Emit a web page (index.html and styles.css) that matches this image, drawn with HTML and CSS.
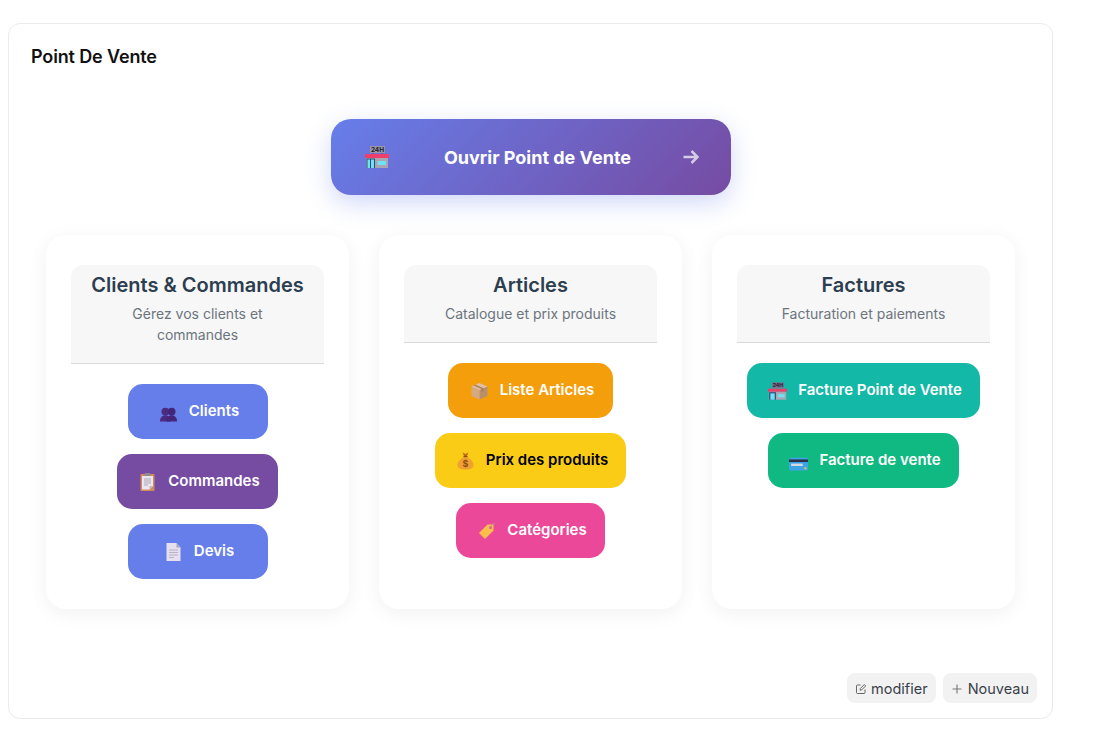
FILE: index.html
```html
<!DOCTYPE html>
<html lang="fr">
<head>
<meta charset="utf-8">
<title>Point De Vente</title>
<link rel="stylesheet" href="styles.css">
</head>
<body>
<div class="panel">
  <div class="panel-title">Point De Vente</div>

  <a class="hero" href="#">
    <svg class="hero-icon" viewBox="0 0 24 22">
      <rect x="5" y="0" width="15" height="7" fill="#9a96a8"/>
      <text x="12.500" y="6" text-anchor="middle" class="sign">24H</text>
      <rect x="7.500" y="7" width="1" height="1" fill="#555"/>
      <rect x="16.500" y="7" width="1" height="1" fill="#555"/>
      <rect x="0" y="8" width="24" height="4" fill="#ee3f6c"/>
      <rect x="1" y="12" width="22" height="10" fill="#a9a6b4"/>
      <rect x="1.500" y="12.500" width="8.500" height="9.500" fill="#2e4a78"/>
      <rect x="2.500" y="13.500" width="2.500" height="8.500" fill="#6fe3f5"/>
      <rect x="6" y="13.500" width="3" height="8.500" fill="#6fe3f5"/>
      <rect x="12.500" y="15" width="8.500" height="4" fill="#6fe3f5"/>
    </svg>
    <span class="hero-label">Ouvrir Point de Vente</span>
    <svg class="hero-arrow" viewBox="0 0 16 14"><path d="M0.500 7h14M8.500 1L14.500 7l-6 6" fill="none" stroke="currentColor" stroke-width="2.500"/></svg>
  </a>

  <div class="columns">
    <section class="col">
      <header class="col-head">
        <h3>Clients &amp; Commandes</h3>
        <p>Gérez vos clients et commandes</p>
      </header>
      <div class="col-btns">
        <a class="btn blue" href="#">
          <svg class="ico" viewBox="0 -2.500 20 20">
            <circle cx="6.500" cy="7" r="4.300" fill="#4b2a80"/>
            <path d="M0.500 18c0-4.500 2.500-7 6-7s6 2.500 6 7z" fill="#4b2a80"/>
            <circle cx="13.500" cy="7" r="4.300" fill="#43267a"/>
            <path d="M7.500 18c0-4.500 2.500-7 6-7s6 2.500 6 7z" fill="#43267a"/>
          </svg>Clients
        </a>
        <a class="btn purple" href="#">
          <svg class="ico" viewBox="0 0 16 18">
            <rect x="1" y="1" width="14" height="17" rx="1" fill="#cf8d5e"/>
            <path d="M2.500 3h11v10l-3.500 3.500h-7.500z" fill="#ebe6ee"/>
            <path d="M10 16.500l3.500-3.500h-3.500z" fill="#bcb6c6"/>
            <rect x="5" y="0" width="6" height="3" rx="1" fill="#8f8a96"/>
            <path d="M4.500 6h7M4.500 8h7M4.500 10h7M4.500 12h4" stroke="#a7a2b0" stroke-width="0.900"/>
          </svg>Commandes
        </a>
        <a class="btn blue" href="#">
          <svg class="ico" viewBox="0 0 16 18">
            <path d="M1 0h10l4 4.500v13.500h-14z" fill="#e6dfee"/>
            <path d="M11 0l4 4.500h-4z" fill="#aaa3b6"/>
            <path d="M3.500 7h9M3.500 9.500h9M3.500 12h9M3.500 14.500h5" stroke="#b3acbf" stroke-width="0.900"/>
          </svg>Devis
        </a>
      </div>
    </section>

    <section class="col">
      <header class="col-head">
        <h3>Articles</h3>
        <p>Catalogue et prix produits</p>
      </header>
      <div class="col-btns">
        <a class="btn orange" href="#">
          <svg class="ico" viewBox="0 0 18 18">
            <path d="M9 1l8 3.500v9.500l-8 3.500z" fill="#b98f6b"/>
            <path d="M9 1l-8 3.500v9.500l8 3.500z" fill="#d2a983"/>
            <path d="M1 4.500l8 3.500 8-3.500-8-3.500z" fill="#e2c09e"/>
            <path d="M5 2.700l8 3.500v3l-2 .8v-3l-8-3.500z" fill="#a97d5b"/>
          </svg>Liste Articles
        </a>
        <a class="btn yellow" href="#">
          <svg class="ico" viewBox="0 0 18 18">
            <path d="M6 0.500l3 1.500 3-1.500-1.500 3.500h-3z" fill="#b96a20"/>
            <rect x="7" y="4" width="4" height="1.500" fill="#8d4f17"/>
            <path d="M7 5.500c-3.500 1.500-6 4.500-6 7.500 0 3 3 4.500 8 4.500s8-1.500 8-4.500c0-3-2.500-6-6-7.500z" fill="#f0a030"/>
            <text x="9" y="15" text-anchor="middle" class="dollar">$</text>
          </svg>Prix des produits
        </a>
        <a class="btn pink" href="#">
          <svg class="ico" viewBox="0 0 18 18">
            <path d="M10 2.500h6v6l-8.500 8.500-6-6z" fill="#fbbf4a"/>
            <circle cx="13" cy="5.500" r="1.500" fill="#d9629c"/>
            <path d="M13 5.500c1-3 3-4.500 4.500-3.500" fill="none" stroke="#a99bc0" stroke-width="0.800"/>
          </svg>Catégories
        </a>
      </div>
    </section>

    <section class="col">
      <header class="col-head">
        <h3>Factures</h3>
        <p>Facturation et paiements</p>
      </header>
      <div class="col-btns">
        <a class="btn teal" href="#">
          <svg class="ico" viewBox="0 0 24 22">
            <rect x="5" y="0" width="15" height="7" fill="#77718f"/>
            <text x="12.500" y="6" text-anchor="middle" class="sign">24H</text>
            <rect x="0" y="8" width="24" height="4" fill="#ee3f6c"/>
            <rect x="1" y="12" width="22" height="10" fill="#a9a6b4"/>
            <rect x="1.500" y="12.500" width="8.500" height="9.500" fill="#2e4a78"/>
            <rect x="3" y="14" width="5.500" height="8" fill="#6fe3f5"/>
            <rect x="12.500" y="15" width="8.500" height="4" fill="#6fe3f5"/>
          </svg>Facture Point de Vente
        </a>
        <a class="btn green" href="#">
          <svg class="ico" viewBox="0 -3 18 14">
            <rect x="0" y="1" width="18" height="12" rx="1.200" fill="#3fa4e6"/>
            <rect x="0" y="2.500" width="18" height="2.500" fill="#2a3346"/>
            <rect x="2" y="6.500" width="11" height="2.200" fill="#d6dbe2"/>
            <rect x="14.500" y="10" width="2" height="1.800" fill="#f4c542"/>
          </svg>Facture de vente
        </a>
      </div>
    </section>
  </div>

  <div class="panel-foot">
    <a class="foot-btn foot-edit" href="#">
      <svg viewBox="0 0 12 12"><path d="M10 6.500v3a1 1 0 0 1-1 1H2.500a1 1 0 0 1-1-1V3a1 1 0 0 1 1-1h3M5 7.200l.3-1.700 4-4 1.400 1.400-4 4z" fill="none" stroke="#666" stroke-width="1"/></svg>modifier
    </a>
    <a class="foot-btn" href="#">
      <svg viewBox="0 0 12 12"><path d="M6 1.500v9M1.500 6h9" fill="none" stroke="#777" stroke-width="1.100"/></svg>Nouveau
    </a>
  </div>
</div>
</body>
</html>
```

FILE: styles.css
```css
* {
    box-sizing: border-box;
}
html, body {
    height: 100%;
}
body {
    margin: 0;
    padding: 23px 65px 0 8px;
    background: #fff;
    font-family: "Inter", "Liberation Sans", sans-serif;
    color: #2c3e50;
}
a {
    text-decoration: none;
}
.sign {
    font: 700 6.500px "Inter", sans-serif;
    fill: #1d1b2b;
}
.dollar {
    font: 700 9px "Inter", sans-serif;
    fill: #8d4f17;
}

.panel {
    height: 696px;
    display: flex;
    flex-direction: column;
    border: 1px solid #ebebeb;
    border-radius: 12px;
    padding: 0 15px 15px 22px;
}
.panel-title {
    margin-top: 22px;
    font-size: 18px;
    line-height: 22px;
    font-weight: 600;
    letter-spacing: -0.14px;
    color: #111;
}

.hero {
    align-self: center;
    margin: 51px 0 0 -7px;
    width: 400px;
    height: 76px;
    display: flex;
    align-items: center;
    padding: 0 32px 0 34px;
    border-radius: 20px;
    background: linear-gradient(135deg, #667eea 0%, #764ba2 100%);
    box-shadow: 0 8px 25px rgba(102, 126, 234, 0.3);
    color: #fff;
}
.hero-icon {
    width: 24px;
    height: 22px;
}
.hero-label {
    flex: 1;
    text-align: center;
    font-size: 18px;
    font-weight: 700;
    padding-left: 4px;
}
.hero-arrow {
    width: 16px;
    height: 14px;
    color: rgba(255, 255, 255, 0.7);
}

.columns {
    margin: 40px 0 0 15px;
    width: 969px;
    display: grid;
    grid-template-columns: repeat(3, 303px);
    gap: 30px;
}
.col {
    height: 374px;
    padding: 30px 25px;
    background: #fff;
    border-radius: 20px;
    box-shadow: 0 4px 20px rgba(0, 0, 0, 0.06);
}
.col-head {
    background: #f7f7f7;
    border-bottom: 1px solid #d9d9d9;
    border-radius: 12px 12px 0 0;
    padding: 8px 20px;
    text-align: center;
}
.col-head h3 {
    margin: 0 0 6px;
    font-size: 20px;
    line-height: 24px;
    font-weight: 600;
    color: #2c3e50;
    white-space: nowrap;
}
.col-head p {
    margin: 0 0 10px;
    font-size: 14px;
    line-height: 21px;
    color: #6c757d;
}
.col-btns {
    display: flex;
    flex-direction: column;
    align-items: center;
    gap: 15px;
    margin-top: 20px;
}
.btn {
    height: 55px;
    min-width: 140px;
    display: flex;
    align-items: center;
    justify-content: center;
    gap: 11px;
    padding: 0 18px 2px;
    border-radius: 15px;
    font-size: 15px;
    font-weight: 600;
    color: #fff;
    white-space: nowrap;
}
.ico {
    width: 19px;
    height: 18px;
    margin: 3px 0 0 3px;
    overflow: visible;
}
.blue { background: #667eea; }
.purple { background: #764ba2; }
.orange { background: #f59e0b; padding: 0 19px 2px; }
.yellow { background: #facc15; color: #000; }
.pink { background: #ec4899; }
.teal { background: #14b8a6; }
.green { background: #10b981; }

.panel-foot {
    margin-top: auto;
    display: flex;
    justify-content: flex-end;
    gap: 7px;
}
.foot-btn {
    height: 30px;
    display: flex;
    align-items: center;
    gap: 5px;
    padding: 0 8px;
    border-radius: 8px;
    background: #f2f2f2;
    font-size: 14.500px;
    color: #3a3f4b;
}
.foot-edit {
    gap: 4px;
}
.foot-btn svg {
    width: 12px;
    height: 12px;
    margin-top: 2px;
}
```
